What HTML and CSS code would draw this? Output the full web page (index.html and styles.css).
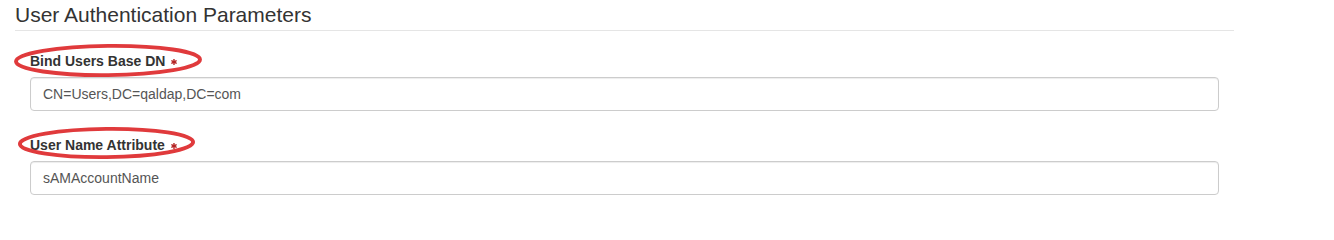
FILE: index.html
```html
<!DOCTYPE html>
<html lang="en">
<head>
<meta charset="utf-8">
<title>User Authentication Parameters</title>
<link rel="stylesheet" href="styles.css">
</head>
<body>
<section class="panel">
  <h2 class="section-title">User Authentication Parameters</h2>
  <div class="fields">
    <div class="form-group">
      <label class="field-label" for="baseDn">Bind Users Base DN<svg class="req" viewBox="0 0 10 10" aria-hidden="true"><g stroke="currentColor" stroke-width="2.4" stroke-linecap="round"><line x1="5" y1="1" x2="5" y2="9"/><line x1="1.5" y1="3" x2="8.5" y2="7"/><line x1="1.5" y1="7" x2="8.5" y2="3"/></g></svg></label>
      <input class="form-control" id="baseDn" type="text" value="CN=Users,DC=qaldap,DC=com">
      <svg class="mark mark-1" viewBox="0 0 188 33" aria-hidden="true"><ellipse cx="94" cy="16.5" rx="92" ry="14.6" fill="none" stroke="#e03a3c" stroke-width="3.9" transform="rotate(-0.6 94 16.5)"/></svg>
    </div>
    <div class="form-group">
      <label class="field-label" for="userAttr">User Name Attribute<svg class="req" viewBox="0 0 10 10" aria-hidden="true"><g stroke="currentColor" stroke-width="2.4" stroke-linecap="round"><line x1="5" y1="1" x2="5" y2="9"/><line x1="1.5" y1="3" x2="8.5" y2="7"/><line x1="1.5" y1="7" x2="8.5" y2="3"/></g></svg></label>
      <input class="form-control" id="userAttr" type="text" value="sAMAccountName">
      <svg class="mark mark-2" viewBox="0 0 177 32" aria-hidden="true"><ellipse cx="88.5" cy="16" rx="86.6" ry="14.1" fill="none" stroke="#e03a3c" stroke-width="3.9" transform="rotate(-0.6 88.5 16)"/></svg>
    </div>
  </div>
</section>
</body>
</html>
```
FILE: styles.css
```css
* {
  box-sizing: border-box;
}

html, body {
  margin: 0;
  padding: 0;
  background: #ffffff;
}

body {
  font-family: "Liberation Sans", Arial, sans-serif;
  font-size: 14px;
  line-height: 20px;
  color: #333333;
}

.panel {
  width: 1234px;
  padding-left: 15px;
}

.section-title {
  margin: 0 0 20px 0;
  padding: 0;
  font-size: 21px;
  font-weight: normal;
  line-height: 30px;
  color: #333333;
  border-bottom: 1px solid #e5e5e5;
}

.fields {
  padding: 0 15px;
}

.form-group {
  position: relative;
  margin-bottom: 24px;
}

.field-label {
  display: block;
  margin-bottom: 6px;
  font-weight: bold;
  font-size: 14px;
  line-height: 20px;
  color: #333333;
}

.req {
  width: 6px;
  height: 6px;
  margin-left: 6px;
  vertical-align: middle;
  color: #b42424;
}

.form-control {
  display: block;
  width: 100%;
  height: 34px;
  padding: 6px 12px;
  font-family: "Liberation Sans", Arial, sans-serif;
  font-size: 14px;
  line-height: 20px;
  color: #555555;
  background: #ffffff;
  border: 1px solid #cccccc;
  border-radius: 4px;
  box-shadow: inset 0 1px 1px rgba(0, 0, 0, 0.075);
  outline: none;
}

.mark {
  position: absolute;
  pointer-events: none;
  overflow: visible;
}

.mark-1 {
  left: -16px;
  top: -7px;
  width: 188px;
  height: 33px;
}

.mark-2 {
  left: -12px;
  top: -8px;
  width: 177px;
  height: 32px;
}
```
